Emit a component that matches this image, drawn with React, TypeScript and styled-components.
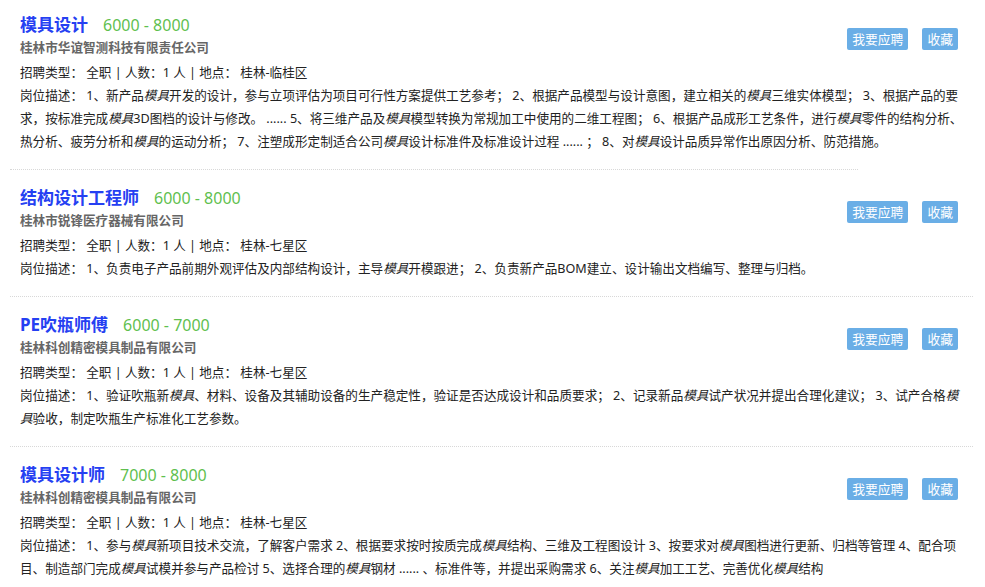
import React from 'react';
import styled, { createGlobalStyle } from 'styled-components';

const GlobalStyle = createGlobalStyle`
  body {
    margin: 0;
    background: #fff;
    font-family: "Noto Sans", "Noto Sans CJK SC", sans-serif;
    color: #222;
  }
`;

const List = styled.div`
  width: 963px;
  margin-left: 10px;
`;

const Item = styled.div<{ $first?: boolean }>`
  padding: ${(p) => (p.$first ? '12px' : '15px')} 10px 16px 10px;
`;

const Rule = styled.div<{ $short?: boolean }>`
  border-top: 1px dotted #d8d8d8;
  margin-right: ${(p) => (p.$short ? '115px' : '0')};
`;

const Head = styled.div`
  display: flex;
  justify-content: space-between;
  align-items: flex-start;
`;

const TitleRow = styled.div`
  display: flex;
  align-items: baseline;
  height: 26px;
  line-height: 26px;
`;

const Title = styled.a`
  font-size: 17px;
  font-weight: bold;
  color: #2540f2;
  text-decoration: none;
`;

const Salary = styled.span`
  margin-left: 15px;
  font-size: 16px;
  color: #5fbf4f;
`;

const Company = styled.div`
  font-size: 12.6px;
  font-weight: bold;
  color: #666;
  line-height: 20px;
`;

const Info = styled.div`
  margin-top: 4px;
  font-size: 12.6px;
  line-height: 22px;
  color: #222;
`;

const Desc = styled.p`
  margin: 0;
  font-size: 12.6px;
  line-height: 23px;
  color: #222;

  em {
    font-style: italic;
  }
`;

const Actions = styled.div`
  display: flex;
  gap: 14px;
  padding-top: 16px;
  margin-right: 5px;
`;

const Button = styled.button`
  height: 22px;
  padding: 0 5px;
  border: none;
  border-radius: 2px;
  background: #6aaee6;
  color: #fff;
  font-family: inherit;
  font-size: 12.8px;
  line-height: 22px;
  cursor: pointer;
`;

type Job = {
  title: string;
  salary: string;
  company: string;
  place: string;
  desc: React.ReactNode;
};

const M = () => <em>模具</em>;

const jobs: Job[] = [
  {
    title: '模具设计',
    salary: '6000 - 8000',
    company: '桂林市华谊智测科技有限责任公司',
    place: '桂林-临桂区',
    desc: (
      <>
        1、新产品<M />开发的设计，参与立项评估为项目可行性方案提供工艺参考； 2、根据产品模型与设计意图，建立相关的<M />三维实体模型； 3、根据产品的要求，按标准完成<M />3D图档的设计与修改。 ...... 5、将三维产品及<M />模型转换为常规加工中使用的二维工程图； 6、根据产品成形工艺条件，进行<M />零件的结构分析、热分析、疲劳分析和<M />的运动分析； 7、注塑成形定制适合公司<M />设计标准件及标准设计过程 ...... ； 8、对<M />设计品质异常作出原因分析、防范措施。
      </>
    ),
  },
  {
    title: '结构设计工程师',
    salary: '6000 - 8000',
    company: '桂林市锐锋医疗器械有限公司',
    place: '桂林-七星区',
    desc: (
      <>
        1、负责电子产品前期外观评估及内部结构设计，主导<M />开模跟进； 2、负责新产品BOM建立、设计输出文档编写、整理与归档。
      </>
    ),
  },
  {
    title: 'PE吹瓶师傅',
    salary: '6000 - 7000',
    company: '桂林科创精密模具制品有限公司',
    place: '桂林-七星区',
    desc: (
      <>
        1、验证吹瓶新<M />、材料、设备及其辅助设备的生产稳定性，验证是否达成设计和品质要求； 2、记录新品<M />试产状况并提出合理化建议； 3、试产合格<M />验收，制定吹瓶生产标准化工艺参数。
      </>
    ),
  },
  {
    title: '模具设计师',
    salary: '7000 - 8000',
    company: '桂林科创精密模具制品有限公司',
    place: '桂林-七星区',
    desc: (
      <>
        1、参与<M />新项目技术交流，了解客户需求 2、根据要求按时按质完成<M />结构、三维及工程图设计 3、按要求对<M />图档进行更新、归档等管理 4、配合项目、制造部门完成<M />试模并参与产品检讨 5、选择合理的<M />钢材 ...... 、标准件等，并提出采购需求 6、关注<M />加工工艺、完善优化<M />结构
      </>
    ),
  },
];

export default function App() {
  return (
    <>
      <GlobalStyle />
      <List>
        {jobs.map((job, i) => (
          <React.Fragment key={i}>
            {i > 0 && <Rule $short={i === 1} />}
            <Item $first={i === 0}>
              <Head>
                <div>
                  <TitleRow>
                    <Title href="#">{job.title}</Title>
                    <Salary>{job.salary}</Salary>
                  </TitleRow>
                  <Company>{job.company}</Company>
                  <Info>
                    招聘类型： 全职 | 人数：1 人 | 地点： {job.place}
                  </Info>
                </div>
                <Actions>
                  <Button>我要应聘</Button>
                  <Button>收藏</Button>
                </Actions>
              </Head>
              <Desc>岗位描述： {job.desc}</Desc>
            </Item>
          </React.Fragment>
        ))}
      </List>
    </>
  );
}
